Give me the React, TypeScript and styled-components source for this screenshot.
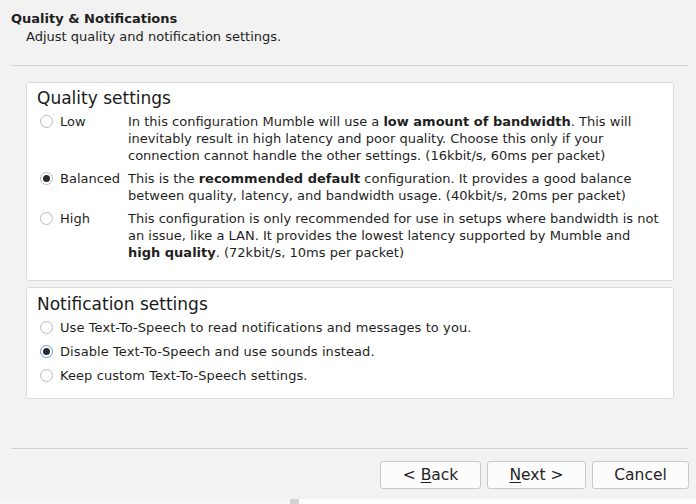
import styled, { createGlobalStyle } from "styled-components";

const GlobalStyle = createGlobalStyle`
	html, body {
		margin: 0;
		padding: 0;
		background: #f2f2f2;
	}
	body {
		font-family: "DejaVu Sans", "Liberation Sans", sans-serif;
		font-size: 13px;
		color: #1f1f1f;
	}
`;

interface QualityOption {
	label: string;
	checked?: boolean;
	text: React.ReactNode;
}

const qualityOptions: QualityOption[] = [
	{
		label: "Low",
		text: (
			<>
				In this configuration Mumble will use a <b>low amount of bandwidth</b>. This will inevitably result in
				high latency and poor quality. Choose this only if your connection cannot handle the other settings.
				(16kbit/s, 60ms per packet)
			</>
		),
	},
	{
		label: "Balanced",
		checked: true,
		text: (
			<>
				This is the <b>recommended default</b> configuration. It provides a good balance between quality,
				latency, and bandwidth usage. (40kbit/s, 20ms per packet)
			</>
		),
	},
	{
		label: "High",
		text: (
			<>
				This configuration is only recommended for use in setups where bandwidth is not an issue, like a LAN. It
				provides the lowest latency supported by Mumble and <b>high quality</b>. (72kbit/s, 10ms per packet)
			</>
		),
	},
];

const notificationOptions = [
	{ label: "Use Text-To-Speech to read notifications and messages to you." },
	{ label: "Disable Text-To-Speech and use sounds instead.", checked: true, focused: true },
	{ label: "Keep custom Text-To-Speech settings." },
];

export default function App() {
	return (
		<Page>
			<GlobalStyle />
			<Header>
				<Title>Quality &amp; Notifications</Title>
				<Subtitle>Adjust quality and notification settings.</Subtitle>
			</Header>
			<Separator />
			<Content>
				<GroupBox $paddingTop={5} $paddingBottom={19}>
					<GroupTitle>Quality settings</GroupTitle>
					<QualityGrid>
						{qualityOptions.map((o) => (
							<QualityRow key={o.label}>
								<Radio $checked={o.checked} />
								<OptionLabel>{o.label}</OptionLabel>
								<Description>{o.text}</Description>
							</QualityRow>
						))}
					</QualityGrid>
				</GroupBox>
				<GroupBox $paddingTop={6} $paddingBottom={14}>
					<GroupTitle>Notification settings</GroupTitle>
					<NotifyList>
						{notificationOptions.map((o) => (
							<NotifyRow key={o.label}>
								<Radio $checked={o.checked} $focused={o.focused} />
								<NotifyLabel>{o.label}</NotifyLabel>
							</NotifyRow>
						))}
					</NotifyList>
				</GroupBox>
			</Content>
			<Separator />
			<ButtonBar>
				<Button>
					&lt; <u>B</u>ack
				</Button>
				<Button $width={99}>
					<u>N</u>ext &gt;
				</Button>
				<Button $width={97}>Cancel</Button>
			</ButtonBar>
			<BottomStrip>
				<StripLeft />
				<StripHandle />
				<StripRight />
			</BottomStrip>
		</Page>
	);
}

//style_components
const Page = styled.div`
	width: 696px;
	height: 504px;
	display: flex;
	flex-direction: column;
	background: #f2f2f2;
	overflow: hidden;
`;

const Header = styled.div`
	padding: 10px 0 0 11px;
	height: 65px;
	box-sizing: border-box;
	line-height: 17px;
	flex-shrink: 0;
`;

const Title = styled.div`
	font-weight: bold;
`;

const Subtitle = styled.div`
	padding-left: 15px;
	margin-top: 1px;
`;

const Separator = styled.div`
	margin: 0 8px 0 11px;
	height: 1px;
	flex-shrink: 0;
	background: #d2d2d2;
`;

const Content = styled.div`
	padding: 16px 22px 0 26px;
	height: 382px;
	flex-shrink: 0;
	box-sizing: border-box;
	display: flex;
	flex-direction: column;
	gap: 6px;
`;

const GroupBox = styled.div<{ $paddingTop: number; $paddingBottom: number }>`
	background: #ffffff;
	border: 1px solid #dadada;
	border-radius: 3px;
	padding: ${(p) => p.$paddingTop}px 10px ${(p) => p.$paddingBottom}px 13px;
`;

const GroupTitle = styled.div`
	font-size: 17px;
	line-height: 21px;
	margin-left: -3px;
	margin-bottom: 4px;
	color: #1a1a1a;
`;

const QualityGrid = styled.div`
	display: flex;
	flex-direction: column;
	gap: 6px;
`;

const QualityRow = styled.div`
	display: grid;
	grid-template-columns: 20px 68px 1fr;
	align-items: start;
	line-height: 17px;
`;

const Radio = styled.span<{ $checked?: boolean; $focused?: boolean }>`
	width: 13px;
	height: 13px;
	margin-top: 2px;
	box-sizing: border-box;
	border-radius: 50%;
	border: 1px solid ${(p) => (p.$focused ? "#5b9ad6" : "#b9b9b9")};
	background: #ffffff;
	display: flex;
	align-items: center;
	justify-content: center;
	&::after {
		content: "";
		display: ${(p) => (p.$checked ? "block" : "none")};
		width: 7px;
		height: 7px;
		border-radius: 50%;
		background: #2b2b2b;
	}
`;

const OptionLabel = styled.span`
	white-space: nowrap;
`;

const NotifyLabel = styled.span`
	white-space: nowrap;
	letter-spacing: 0.08px;
`;

const Description = styled.div`
	padding-right: 2px;
	b {
		font-weight: bold;
	}
`;

const NotifyList = styled.div`
	display: flex;
	flex-direction: column;
	gap: 7px;
`;

const NotifyRow = styled.div`
	display: flex;
	gap: 7px;
	align-items: flex-start;
	line-height: 17px;
`;

const ButtonBar = styled.div`
	display: flex;
	justify-content: flex-end;
	gap: 6px;
	padding: 12px 7px 0 0;
	height: 50px;
	flex-shrink: 0;
	box-sizing: border-box;
`;

const Button = styled.button<{ $width?: number }>`
	width: ${(p) => p.$width ?? 101}px;
	height: 28px;
	border: 1px solid #c8c8c8;
	border-radius: 3px;
	background: #fcfcfc;
	font-family: "DejaVu Sans", "Liberation Sans", sans-serif;
	font-size: 15.5px;
	color: #1f1f1f;
	padding: 0;
	u {
		text-decoration-thickness: 1px;
		text-underline-offset: 2px;
	}
`;

const BottomStrip = styled.div`
	display: flex;
	height: 5px;
	flex-shrink: 0;
`;

const StripLeft = styled.div`
	width: 290px;
	background: #f7f7f7;
`;

const StripHandle = styled.div`
	width: 9px;
	background: #d3d3d3;
`;

const StripRight = styled.div`
	flex: 1;
	background: #ffffff;
`;
